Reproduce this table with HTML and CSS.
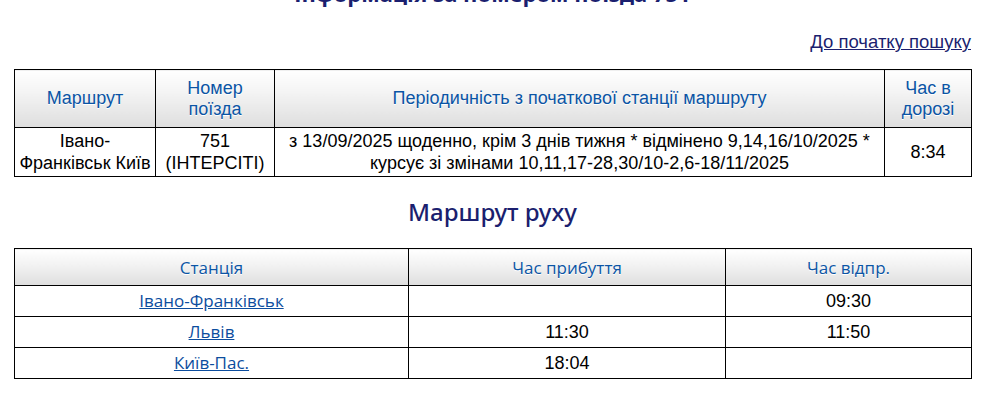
FILE: index.html
```html
<!DOCTYPE html>
<html lang="uk">
<head>
<meta charset="utf-8">
<title>Інформація за номером поїзда 751</title>
<link rel="stylesheet" href="styles.css">
</head>
<body>
<div class="page">
  <h1 class="page-title">Інформація за номером поїзда 751</h1>
  <div class="back-row"><a class="back-link" href="#">До початку пошуку</a></div>

  <table class="grid info">
    <colgroup>
      <col class="c-route"><col class="c-num"><col class="c-period"><col class="c-time">
    </colgroup>
    <thead>
      <tr>
        <th>Маршрут</th>
        <th>Номер<br>поїзда</th>
        <th>Періодичність з початкової станції маршруту</th>
        <th>Час в<br>дорозі</th>
      </tr>
    </thead>
    <tbody>
      <tr>
        <td>Івано-<br>Франківськ Київ</td>
        <td>751<br>(ІНТЕРСІТІ)</td>
        <td>з 13/09/2025 щоденно, крім 3 днів тижня * відмінено 9,14,16/10/2025 *<br>курсує зі змінами 10,11,17-28,30/10-2,6-18/11/2025</td>
        <td>8:34</td>
      </tr>
    </tbody>
  </table>

  <h2 class="section-title">Маршрут руху</h2>

  <table class="grid stops">
    <colgroup>
      <col class="c-station"><col class="c-arr"><col class="c-dep">
    </colgroup>
    <thead>
      <tr>
        <th>Станція</th>
        <th>Час прибуття</th>
        <th>Час відпр.</th>
      </tr>
    </thead>
    <tbody>
      <tr><td><a class="station" href="#">Івано-Франківськ</a></td><td></td><td>09:30</td></tr>
      <tr><td><a class="station" href="#">Львів</a></td><td>11:30</td><td>11:50</td></tr>
      <tr><td><a class="station" href="#">Київ-Пас.</a></td><td>18:04</td><td></td></tr>
    </tbody>
  </table>
</div>
</body>
</html>
```

FILE: styles.css
```css
html, body {
  margin: 0;
  padding: 0;
  background: #fff;
}
body {
  font-family: "Liberation Sans", Arial, sans-serif;
  font-size: 18px;
  color: #000;
  overflow: hidden;
}
.page {
  width: 957px;
  margin-left: 14px;
}
.page-title {
  margin: -18px 0 0 0;
  height: 22px;
  line-height: 22px;
  font-family: "Noto Sans", sans-serif;
  font-size: 22px;
  font-weight: 700;
  text-align: center;
  color: #1b1f6f;
}
.back-row {
  display: flex;
  justify-content: flex-end;
  margin-top: 28px;
  height: 20px;
}
.back-link {
  font-family: "Liberation Sans Narrow", "Liberation Sans", sans-serif;
  font-stretch: condensed;
  font-size: 18.5px;
  line-height: 20px;
  color: #1b1f6f;
  text-decoration: underline;
}
.grid {
  width: 957px;
  border-collapse: collapse;
  table-layout: fixed;
}
.grid th, .grid td {
  border: 1px solid #000;
  text-align: center;
  padding: 0 2px;
}
.grid th {
  font-weight: 400;
  color: #0b55a5;
  line-height: 21px;
  text-shadow: 0 1px 0 #fff;
  background: linear-gradient(to bottom, #ffffff 0%, #f3f3f3 40%, #dedede 100%);
}
.grid td {
  line-height: 22px;
}
.info {
  margin-top: 17px;
}
.info thead tr { height: 58px; }
.info tbody tr { height: 49px; }
.c-route { width: 141px; }
.c-num { width: 119px; }
.c-period { width: 610px; }
.c-time { width: 87px; }

.section-title {
  margin: 21px 0 0 0;
  height: 28px;
  line-height: 28px;
  font-family: "Noto Sans", sans-serif;
  font-size: 24px;
  font-weight: 500;
  text-align: center;
  color: #1b1f6f;
}
.stops {
  margin-top: 22px;
}
.stops th {
  font-family: "Open Sans", sans-serif;
  font-size: 17px;
}
.stops thead tr { height: 37px; }
.stops tbody tr { height: 31px; }
.c-station { width: 394px; }
.c-arr { width: 317px; }
.c-dep { width: 246px; }
.station {
  font-family: "Open Sans", sans-serif;
  font-size: 17px;
  color: #0c4d9e;
  text-decoration: underline;
}
```
